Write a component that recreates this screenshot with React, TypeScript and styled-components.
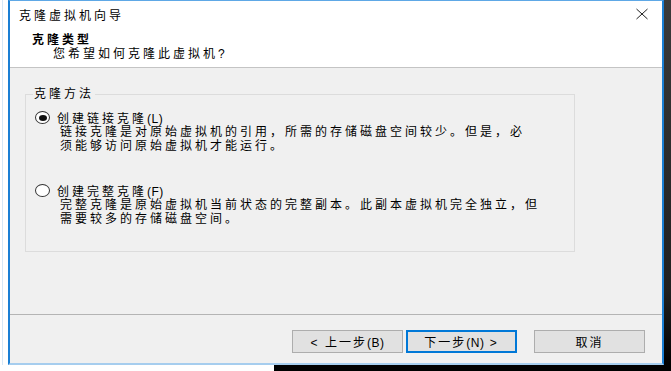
import React from 'react';
import styled, { createGlobalStyle } from 'styled-components';

const GlobalStyle = createGlobalStyle`
  html, body {
    margin: 0;
    padding: 0;
  }
  body {
    width: 671px;
    height: 371px;
    overflow: hidden;
    background: #fff;
    font-family: 'Liberation Sans', 'Noto Sans CJK SC', sans-serif;
    font-size: 12px;
    color: #000;
  }
`;

const Screen = styled.div`
  width: 671px;
  height: 371px;
  display: flex;
  flex-direction: column;
`;

const TopRow = styled.div`
  display: flex;
  height: 365px;
`;

const LeftEdge = styled.div`
  width: 8px;
  box-sizing: border-box;
  padding-left: 2px;
  background: #fff;
  & > div {
    width: 1px;
    height: 100%;
    background: #d6e7f6;
  }
`;

const RightEdge = styled.div`
  flex: 1;
  background: linear-gradient(#3a3a3a, #202020 80%, #000);
`;

const BottomRow = styled.div`
  display: flex;
  flex: 1;
`;

const BottomShade = styled.div<{ $dark?: boolean }>`
  width: ${(p) => (p.$dark ? 'auto' : '274px')};
  flex: ${(p) => (p.$dark ? 1 : 'none')};
  background: ${(p) => (p.$dark ? '#000' : '#fff')};
`;

const Window = styled.div`
  width: 656px;
  height: 365px;
  box-sizing: border-box;
  border-left: 2px solid #1a7fd4;
  border-right: 2px solid #1a7fd4;
  border-top: 1px solid #5ea8e6;
  border-bottom: 2px solid #a6cdee;
  display: flex;
  flex-direction: column;
  background: #f0f0f0;
`;

const TitleBar = styled.div`
  height: 27px;
  flex: none;
  display: flex;
  align-items: center;
  justify-content: space-between;
  padding: 0 13px 0 9px;
  background: #fff;
  letter-spacing: 3px;
`;

const CloseButton = styled.div`
  width: 14px;
  height: 12px;
  display: flex;
  margin-top: -1px;
`;

const Header = styled.div`
  background: #fff;
  padding: 5px 0 6px 22px;
  border-bottom: 1px solid #c4c4c4;
  line-height: 14px;
  letter-spacing: 3px;
`;

const HeaderTitle = styled.div`
  font-weight: bold;
`;

const HeaderSub = styled.div`
  padding-left: 21px;
`;

const Body = styled.div`
  flex: 1;
  padding: 19px 0 0 15px;
`;

const Group = styled.fieldset`
  margin: 0;
  width: 550px;
  box-sizing: border-box;
  border: 1px solid #dcdcdc;
  padding: 9px 10px 25px 9px;
  letter-spacing: 3px;
`;

const Legend = styled.legend`
  padding: 0 1px;
  margin-left: -2px;
  line-height: 14px;
`;

const Latin = styled.span`
  letter-spacing: 0.5px;
`;

const Option = styled.div<{ $gap?: number }>`
  margin-top: ${(p) => p.$gap ?? 0}px;
`;

const OptionRow = styled.div`
  display: flex;
  align-items: center;
  height: 15px;
  gap: 7px;
`;

const Radio = styled.span<{ $checked?: boolean }>`
  width: 15px;
  height: 13px;
  box-sizing: border-box;
  border: 1px solid #333;
  border-radius: 50%;
  background: #fff;
  display: flex;
  align-items: center;
  justify-content: center;
  &::after {
    content: '';
    display: ${(p) => (p.$checked ? 'block' : 'none')};
    width: 8px;
    height: 6px;
    border-radius: 50%;
    background: #111;
  }
`;

const Description = styled.div`
  padding-left: 25px;
  line-height: 14px;
`;

const Footer = styled.div`
  height: 49px;
  flex: none;
  border-top: 1px solid #b4b4b4;
  display: flex;
  justify-content: flex-end;
  align-items: flex-start;
  padding: 15px 17px 0 0;
  box-sizing: border-box;
`;

const Button = styled.button<{ $primary?: boolean; $space?: number }>`
  width: 111px;
  height: 23px;
  box-sizing: border-box;
  margin-left: ${(p) => p.$space ?? 0}px;
  background: #e1e1e1;
  border: ${(p) => (p.$primary ? '2px solid #0078d7' : '1px solid #adadad')};
  font-family: inherit;
  font-size: 12px;
  letter-spacing: 2px;
  color: #000;
  padding: 0;
`;

const options = [
  {
    label: '创建链接克隆',
    key: 'L',
    checked: true,
    lines: ['链接克隆是对原始虚拟机的引用，所需的存储磁盘空间较少。但是，必', '须能够访问原始虚拟机才能运行。'],
  },
  {
    label: '创建完整克隆',
    key: 'F',
    checked: false,
    lines: ['完整克隆是原始虚拟机当前状态的完整副本。此副本虚拟机完全独立，但', '需要较多的存储磁盘空间。'],
  },
];

export default function App() {
  return (
    <>
      <GlobalStyle />
      <Screen>
        <TopRow>
          <LeftEdge>
            <div />
          </LeftEdge>
          <Window>
            <TitleBar>
              <span>克隆虚拟机向导</span>
              <CloseButton>
                <svg width="14" height="12" viewBox="0 0 14 12">
                  <path d="M1.5 1 L12.5 11 M12.5 1 L1.5 11" stroke="#222" strokeWidth="1" fill="none" />
                </svg>
              </CloseButton>
            </TitleBar>
            <Header>
              <HeaderTitle>克隆类型</HeaderTitle>
              <HeaderSub>您希望如何克隆此虚拟机?</HeaderSub>
            </Header>
            <Body>
              <Group>
                <Legend>克隆方法</Legend>
                {options.map((o, i) => (
                  <Option key={o.key} $gap={i === 0 ? 0 : 30}>
                    <OptionRow>
                      <Radio $checked={o.checked} />
                      <span>
                        {o.label}
                        <Latin>({o.key})</Latin>
                      </span>
                    </OptionRow>
                    {o.lines.map((l) => (
                      <Description key={l}>{l}</Description>
                    ))}
                  </Option>
                ))}
              </Group>
            </Body>
            <Footer>
              <Button>
                &lt; 上一步<Latin>(B)</Latin>
              </Button>
              <Button $primary $space={3}>
                下一步<Latin>(N)</Latin> &gt;
              </Button>
              <Button $space={17}>取消</Button>
            </Footer>
          </Window>
          <RightEdge />
        </TopRow>
        <BottomRow>
          <BottomShade />
          <BottomShade $dark />
        </BottomRow>
      </Screen>
    </>
  );
}
